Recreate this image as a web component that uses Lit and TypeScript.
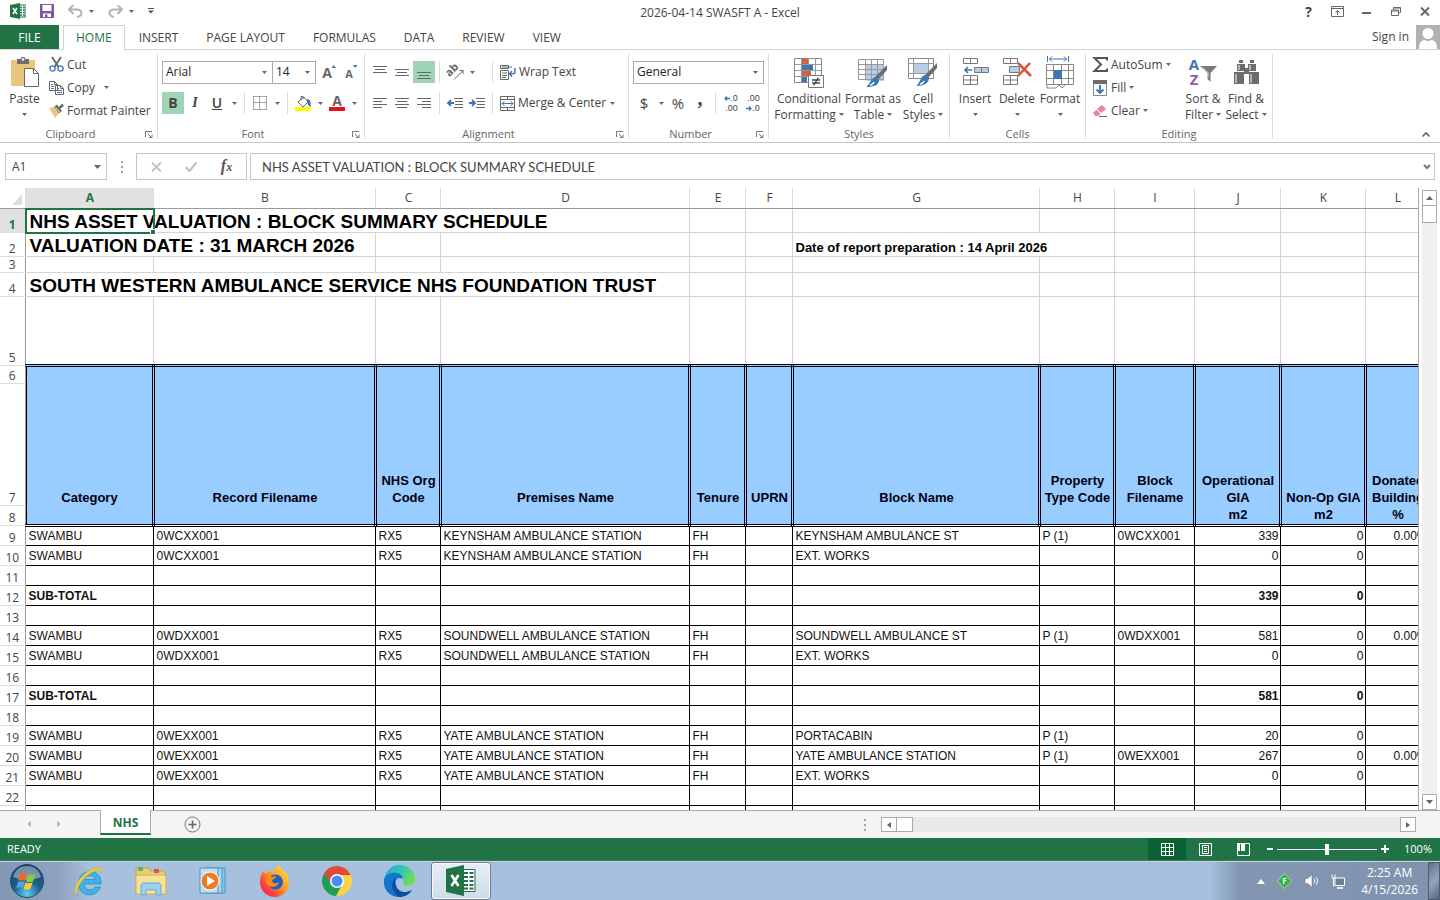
import { LitElement, html, css, svg, nothing, TemplateResult } from "lit";
import { customElement } from "lit/decorators.js";
import { classMap } from "lit/directives/class-map.js";
import { styleMap } from "lit/directives/style-map.js";

const icon = (w: number, h: number, body: unknown) =>
  html`<svg width=${w} height=${h} viewBox="0 0 ${w} ${h}" fill="none" aria-hidden="true">${body}</svg>`;

const glyph = (text: string, x: number, y: number, size: number, color: string) =>
  svg`<text x=${x} y=${y} font-family="Open Sans, Noto Sans, sans-serif" font-weight="700" font-size=${size} text-anchor="middle" fill=${color}>${text}</text>`;

const caret = html`<svg class="caret" width="5" height="3" viewBox="0 0 5 3" aria-hidden="true"><path d="M0 0h5L2.500 3z" fill="#666" /></svg>`;

const I = {
  excel: icon(16, 16, svg`<path d="M9 2h7v12H9z" fill="#fff" stroke="#217346"/><path d="M10 4.500h2M13 4.500h2M10 7h2M13 7h2M10 9.500h2M13 9.500h2M10 12h2M13 12h2" stroke="#217346" stroke-width="1.300"/><path d="M0 2l10-2v16L0 14z" fill="#217346"/><path d="M3 5l4 6M7 5l-4 6" stroke="#fff" stroke-width="1.600"/>`),
  save: icon(14, 14, svg`<path d="M0 0h14v14H0z" fill="#7e57a5"/><path d="M2.500 1h9v6h-9z" fill="#fff"/><path d="M3 9.500h8V13H3z" fill="#fff"/><path d="M5 10.500h2.500V13H5z" fill="#7e57a5"/>`),
  undo: icon(15, 13, svg`<path d="M5.500 0L1 4.500 5.500 9M1.500 4.500h7c3 0 5 1.500 5 3.500 0 2.500-2 3.500-4.500 4" stroke="#b4b4b4" stroke-width="2"/>`),
  redo: icon(15, 13, svg`<path d="M9.500 0L14 4.500 9.500 9M13.500 4.500h-7c-3 0-5 1.500-5 3.500 0 2.500 2 3.500 4.500 4" stroke="#b4b4b4" stroke-width="2"/>`),
  custom: icon(6, 6, svg`<path d="M0 .500h6" stroke="#555"/><path d="M0 2.500h6L3 5.500z" fill="#555"/>`),
  ribbonOpts: icon(13, 11, svg`<path d="M.500.500h12v10H.500zM.500 2.500h12M6.500 9V4.500M4.500 6.500l2-2 2 2" stroke="#666"/>`),
  min: icon(9, 9, svg`<path d="M0 6h9" stroke="#666" stroke-width="2"/>`),
  restore: icon(10, 9, svg`<path d="M2.500 2.500V.500h7v5H7.500M.500 3h7v5.500h-7zM.500 4h7M2.500 1h7" stroke="#666"/>`),
  close: icon(10, 9, svg`<path d="M1 .500l8 8M9 .500l-8 8" stroke="#666" stroke-width="2"/>`),
  avatar: icon(24, 24, svg`<path d="M0 0h24v24H0z" fill="#b1b1b1"/><circle cx="12" cy="8.500" r="5.500" fill="#fff"/><path d="M3 24c0-6 2-9 6-9 2 1.500 4 1.500 6 0 4 0 6 3 6 9z" fill="#fff"/>`),
  paste: icon(29, 31, svg`<path d="M1 3h24v26H1z" fill="#e9c57d"/><path d="M7 2h3.500a2.500 2 0 0 1 5 0H19v5H7z" fill="#6d6d6d"/><circle cx="13" cy="2.500" r="1.300" fill="#fff"/><path d="M14.500 11.500h9l5 5v13h-14z" fill="#fff" stroke="#666"/><path d="M23.500 11.500v5h5" stroke="#666"/>`),
  cut: icon(15, 15, svg`<path d="M3 0l6.500 10M12 0L5.500 10" stroke="#666" stroke-width="1.800"/><circle cx="3.500" cy="11.500" r="2.600" stroke="#3e76b5" stroke-width="1.300"/><circle cx="11.500" cy="11.500" r="2.600" stroke="#3e76b5" stroke-width="1.300"/>`),
  copy: icon(15, 14, svg`<path d="M.500.500h5l3 3v6h-8zM6.500 4.500h5l3 3v6h-8z" fill="#fff" stroke="#666"/><path d="M5.500.500v3h3M11.500 4.500v3h3" stroke="#666"/><path d="M2 3.500h2M2 5.500h3M2 7.500h3M8 7.500h2M8 9.500h5M8 11.500h5" stroke="#3e76b5"/>`),
  painter: icon(16, 15, svg`<path d="M1 5l5-1 5 6-4 5z" fill="#e9c57d"/><path d="M6 4l3-2.500L14 8l-3 2.500z" fill="#6d6d6d"/><path d="M10 5l4-4.500 2 2.500-4 3z" fill="#6d6d6d"/><path d="M7.500 4.500l4.500 5" stroke="#fff"/>`),
  launcher: icon(8, 7, svg`<path d="M.500 6V.500H7M3 3l3 3M7 3.500V6.500H4" stroke="#777"/>`),
  grow: icon(14, 16, svg`${glyph("A", 5, 14, 14, "#666")}<path d="M9.500 4h4.500L11.800 1z" fill="#3e76b5"/>`),
  shrink: icon(14, 16, svg`${glyph("A", 5, 14, 11, "#666")}<path d="M9 1h4.500L11.300 4z" fill="#3e76b5"/>`),
  borders: icon(14, 14, svg`<path d="M.500.500h13M.500.500v13M13.500.500v13M.500 6.500h13M6.500.500v13M.500 13.500h13" stroke="#555" stroke-dasharray="1 1"/>`),
  fill: icon(17, 16, svg`<path d="M3 7l6-5 4 5-5 5z" fill="#fff" stroke="#666"/><path d="M6 5V1.500h2V4" stroke="#666"/><path d="M12 4c4 0 4 4 3.500 8-2-1-3.500-3-3.500-8z" fill="#3e76b5"/><path d="M0 12h16v4H0z" fill="#ff0"/>`),
  color: icon(16, 16, svg`${glyph("A", 8, 11, 14, "#666")}<path d="M0 12h16v4H0z" fill="#e6101a"/>`),
  orient: icon(17, 16, svg`<g transform="rotate(-45 6 7)">${glyph("ab", 6, 9, 11, "#666")}</g><path d="M7 15.500l9-9M12.500 6.500H16V10" stroke="#666"/>`),
  wrap: icon(16, 15, svg`<path d="M.500.500h8v3h-8zM.500 5.500h8v9h-8z" stroke="#666"/><path d="M2 2h10M2 8h5M2 10.500h5M2 12.500h4" stroke="#666"/><path d="M15 3v4.500c0 1-1 1.500-5 1.500M12 6L9.500 9 12 11.500" stroke="#3e76b5" stroke-width="1.500"/>`),
  merge: icon(15, 15, svg`<path d="M.500.500h14v14H.500zM.500 3.500h14M.500 11.500h14M7.500.500v3M7.500 11.500v3" stroke="#666"/><path d="M2 7.500h11M4.500 5L2 7.500 4.500 10M10.500 5L13 7.500 10.500 10" stroke="#3e76b5"/>`),
  outdent: icon(16, 11, svg`<path d="M7 .500h9M8 3.500h8M8 6.500h8M7 9.500h9" stroke="#666"/><path d="M7 5H1M4 2L1 5l3 3" stroke="#3e76b5" stroke-width="1.800"/>`),
  indent: icon(16, 11, svg`<path d="M7 .500h9M8 3.500h8M8 6.500h8M7 9.500h9" stroke="#666"/><path d="M0 5h6M3 2l3 3-3 3" stroke="#3e76b5" stroke-width="1.800"/>`),
  arrowL: icon(6, 5, svg`<path d="M6 2.500H1M3 .500l-2 2 2 2" stroke="#3e76b5" stroke-width="1.300"/>`),
  arrowR: icon(6, 5, svg`<path d="M0 2.500h5M3 .500l2 2-2 2" stroke="#3e76b5" stroke-width="1.300"/>`),
  cond: icon(30, 31, svg`<path d="M.500 1.500h27v24H.500z" fill="#fff" stroke="#888"/><path d="M7.500 1.500v24M14.500 1.500v24M21.500 1.500v24M.500 7.500h27M.500 13.500h27M.500 19.500h27" stroke="#999"/><path d="M8 2h6v5H8zM8 14h9v5H8z" fill="#d5603c"/><path d="M8 8h11v5H8zM8 20h5v5H8z" fill="#3e76b5"/><path d="M14.500 18.500h15v12h-15z" fill="#fff" stroke="#777"/><path d="M18 23h8M18 26h8M24.500 20.500l-5 8" stroke="#444" stroke-width="1.300"/>`),
  fmtTable: icon(30, 31, svg`<path d="M8 8h18v16H8z" fill="#b9cde5"/><path d="M.500 2.500h25v20H.500zM7.500 2.500v20M13.500 2.500v20M19.500 2.500v20M.500 7.500h25M.500 12.500h25M.500 17.500h25" stroke="#999"/><path d="M29 8v5l-10 11-3-3z" fill="#6d6d6d"/><path d="M18 20l3 3c0 5-5 7-13 7 4-2 4-9 10-10z" fill="#3e76b5"/><path d="M12 28c2 0 3-1 4-3" stroke="#fff" stroke-width="1.500"/>`),
  cellStyle: icon(30, 31, svg`<path d="M.500 1.500h25v20H.500z" fill="#fff" stroke="#888"/><path d="M5.500 1.500v20M20.500 1.500v20M.500 6.500h25M.500 16.500h25" stroke="#999"/><path d="M6 7h14v9H6z" fill="#b9cde5"/><path d="M29 6v5L19 22l-3-3z" fill="#6d6d6d"/><path d="M17 18l4 3c0 5-5 8-13 8 4-2 4-10 9-11z" fill="#3e76b5"/><path d="M12 27c2 0 3-1 4-3" stroke="#fff" stroke-width="1.500"/>`),
  insert: icon(27, 30, svg`<path d="M1.500 1.500h14v5h-14zM8.500 1.500v5M1.500 18.500h14v9h-14zM8.500 18.500v9M1.500 23h14" stroke="#777"/><path d="M12.500 10.500h14v5h-14z" fill="#b9cde5" stroke="#777"/><path d="M19.500 10.500v5" stroke="#777"/><path d="M10 13H3M6 10l-3 3 3 3" stroke="#3e76b5" stroke-width="1.700"/>`),
  del: icon(30, 30, svg`<path d="M1.500 1.500h14v5h-14zM8.500 1.500v5M1.500 18.500h14v9h-14zM8.500 18.500v9M1.500 23h14" stroke="#777"/><path d="M7.500 9.500h10v6h-10z" fill="#b9cde5" stroke="#777"/><path d="M16 6l13 13M28 6L16 19" stroke="#dc5038" stroke-width="2.500"/>`),
  format: icon(28, 33, svg`<path d="M1.500 0v6M22.500 0v6M3 3h18M6 .500L3.500 3 6 5.500M18 .500L20.500 3 18 5.500" stroke="#3e76b5"/><path d="M.500 8.500h27v20H.500zM7.500 8.500v20M15.500 8.500v20M22.500 8.500v20M.500 14.500h27M.500 22.500h27" stroke="#888"/><path d="M8 14h8v9H8z" fill="#3e76b5"/><path d="M1 29v3h9l3-3 3 3 3-3" stroke="#888"/>`),
  sum: icon(15, 15, svg`<path d="M14 3.500V1H1.500L8 7.500 1.500 14H14v-2.500" stroke="#555" stroke-width="2"/>`),
  fillDown: icon(14, 16, svg`<path d="M.500 1.500h13v14H.500z" fill="#fff" stroke="#888"/><path d="M0 0h14v4H0z" fill="#6d6d6d"/><path d="M7 5v8M3.500 9.500L7 13l3.500-3.500" stroke="#3e76b5" stroke-width="1.900"/>`),
  clear: icon(14, 12, svg`<path d="M4 4l5-4 4 4-5 4z" fill="#e8849c"/><path d="M0 8l3.500-3.500L7.500 9 5 11H2.500z" fill="#e8849c"/><path d="M6 11.500h8" stroke="#666"/>`),
  sort: icon(30, 31, svg`${glyph("A", 6, 13, 15, "#3e76b5")}${glyph("Z", 6, 28, 15, "#8a5fb0")}<path d="M12 9h17l-6.500 7v9l-3-3v-6z" fill="#7a7a7a"/><path d="M15 10.500l5 5v5" stroke="#ddd"/>`),
  find: icon(27, 31, svg`<path d="M6 3h4v3H6zM17 3h4v3h-4zM4 7h8v7H4zM15 7h8v7h-8zM1 15h10v12H1zM16 15h10v12H16zM11 11h5v6h-5z" fill="#6d6d6d"/><path d="M3 17v9M18 17v9M6 8v5M17 8v5" stroke="#fff"/>`),
  collapse: icon(8, 5, svg`<path d="M.500 4.500L4 1l3.500 3.500" stroke="#666" stroke-width="1.600"/>`),
  cancel: icon(11, 10, svg`<path d="M1 .500l9 9M10 .500l-9 9" stroke="#c0c0c0" stroke-width="1.800"/>`),
  ok: icon(12, 10, svg`<path d="M.500 5l4 4 7-8.500" stroke="#c0c0c0" stroke-width="2.200"/>`),
  expand: icon(8, 6, svg`<path d="M1 1l3 3 3-3" stroke="#777" stroke-width="2"/>`),
  triL: icon(4, 6, svg`<path d="M4 0v6L0 3z" fill="#666"/>`),
  triR: icon(4, 6, svg`<path d="M0 0v6l4-3z" fill="#666"/>`),
  triU: icon(7, 4, svg`<path d="M0 4h7L3.500 0z" fill="#666"/>`),
  triD: icon(7, 4, svg`<path d="M0 0h7L3.500 4z" fill="#666"/>`),
  add: icon(17, 17, svg`<circle cx="8.500" cy="8.500" r="7.500" stroke="#777"/><path d="M4.500 8.500h8M8.500 4.500v8" stroke="#666" stroke-width="1.600"/>`),
  vNormal: icon(13, 13, svg`<path d="M.500.500h12v12H.500zM4.500.500v12M8.500.500v12M.500 4.500h12M.500 8.500h12" stroke="#fff"/>`),
  vLayout: icon(13, 13, svg`<path d="M.500.500h12v12H.500zM3.500 2.500h6v8h-6zM5 4.500h3M5 6.500h3M5 8.500h3" stroke="#fff"/>`),
  vBreak: icon(13, 13, svg`<path d="M.500.500h12v12H.500z" stroke="#fff"/><path d="M0 0h3v8H0zM4 0h4v8H4z" fill="#fff"/>`),
};

const taskIcons: Record<string, TemplateResult> = {
  start: icon(36, 36, svg`<defs><radialGradient id="orb" cx=".5" cy=".9" r=".9"><stop offset="0" stop-color="#5fd0f0"/><stop offset=".45" stop-color="#1f6391"/><stop offset="1" stop-color="#173a60"/></radialGradient></defs><circle cx="18" cy="18" r="16.500" fill="url(#orb)" stroke="#2b4a6b"/><path d="M4 14C6 6 12 3 18 3s12 3 14 11c-9 4-19 4-28 0z" fill="#fff" opacity=".4"/><path d="M11 11c3-2 5-1 7 0l-2 7c-2-1-4-1-7 0z" fill="#ee6a2c"/><path d="M19 11.500c2 1 4 1 7 0l-2 7c-3 1-5 1-7 0z" fill="#92c83e"/><path d="M9 19c3-1 5-1 7 0l-2 6c-2-1-4-1-7 0z" fill="#4aa8e0"/><path d="M16.500 19.500c2 1 4 1 7 0l-2 6.500c-3 1-5 1-7 0z" fill="#fbc932"/>`),
  ie: icon(34, 34, svg`<path d="M29 20H12c0 7 9 7 11 3h5.500c-4 12-22 10-22-4 0-15 24-16 22.500 1zM12.500 15.500H23c-.500-5-10-5-10.500 0z" fill="#3db3e8" stroke="#2286c0" stroke-width=".7"/><path d="M5 31C-2 26 9 8 24 4c5-1 7 1 5 5 0-3-2-4-6-2C12 11 3 24 5 31z" fill="#f5cf3a" stroke="#d9a520" stroke-width=".5"/>`),
  files: icon(34, 34, svg`<path d="M2 4h12l2 3h15v22H2z" fill="#eccd72" stroke="#c9a244"/><path d="M4 3h5v4H4z" fill="#5cb85c"/><path d="M20 5h5v4h-5z" fill="#d9534f"/><path d="M2 11h30v19H2z" fill="#f7e29a" stroke="#cfae55"/><path d="M7 31V22c0-2 1-3 3-3h14c2 0 3 1 3 3v9h-5v-5H12v5z" fill="#9ad1ee" stroke="#6aa9d1"/>`),
  wmp: icon(34, 34, svg`<path d="M12 4h17v25H12z" fill="#8ac6e8" stroke="#4c95c5"/><path d="M9 4h17v25H9z" fill="#a7d6ef" stroke="#4c95c5"/><path d="M4 4h18v25H4z" fill="#bfe0f2" stroke="#4c95c5"/><circle cx="14" cy="17" r="9" fill="#ee7a22" stroke="#fff"/><path d="M11 12l8 5-8 5z" fill="#fff"/>`),
  firefox: icon(34, 34, svg`<defs><linearGradient id="ff" x1="1" y1="0" x2="0" y2="1"><stop offset="0" stop-color="#fff04a"/><stop offset=".45" stop-color="#ff9a1f"/><stop offset=".75" stop-color="#ff3b3f"/><stop offset="1" stop-color="#e0207a"/></linearGradient></defs><path d="M17 33C8 33 2 26 2 18c0-5 1-8 4-11l1 3 4-3c2 0 3 1 4 2 1-4 3-6 6-8 0 4 10 6 10 16 0 9-5 16-14 16z" fill="url(#ff)"/><circle cx="17.500" cy="18" r="7.500" fill="#1e5fc4"/><path d="M7 12c3-2 6 0 7 1l4-1c0 3-4 3-4 5 1 3 4 3 7 1-1 6-11 7-13 0-1-2-1-4-1-6z" fill="#ff8a1c"/>`),
  chrome: icon(34, 34, svg`<circle cx="17" cy="17" r="15" fill="#fcd34a"/><path d="M17 17L4 9.500A15 15 0 0 1 30.500 11H17z" fill="#dd4b3e"/><path d="M4 9.500A15 15 0 0 0 16 32l6-11-5-4z" fill="#1e9e57"/><path d="M4 9.500L11.500 20 17 11h13.500A15 15 0 0 0 4 9.500z" fill="#dd4b3e"/><circle cx="17" cy="17" r="7" fill="#fff"/><circle cx="17" cy="17" r="5.500" fill="#4a8af4"/>`),
  edge: icon(34, 34, svg`<defs><linearGradient id="eg" x1="0" y1="0" x2="1" y2=".4"><stop offset="0" stop-color="#2aa5e0"/><stop offset=".6" stop-color="#35c8b0"/><stop offset="1" stop-color="#6fdb5c"/></linearGradient></defs><path d="M2 17C3 7 9 1 17 1c9 0 16 6 16 14 0 4-3 7-7 7-3 0-6-1-5-3 2-4-1-8-6-8C9 11 4 12 2 17z" fill="url(#eg)"/><path d="M2 16c1-5 6-8 12-7 4 0 7 3 7 6-6-3-9 2-7 7 2 6 9 8 16 4-4 6-10 7-13 7C8 33 1 26 2 16z" fill="#1277cc"/><path d="M14 14c-6 4-5 14 3 19 5 0 10-2 13-7-7 4-14 2-16-4-1-3-1-6 0-8z" fill="#0c4f9e"/>`),
  excel: icon(30, 34, svg`<path d="M17 5.500h12v22H17z" fill="#fff" stroke="#217346"/><path d="M18 9h4M23.500 9h4M18 13h4M23.500 13h4M18 17h4M23.500 17h4M18 21h4M23.500 21h4M18 24.500h4M23.500 24.500h4" stroke="#217346" stroke-width="2"/><path d="M0 5l18-4v31L0 28z" fill="#217346"/><path d="M5.500 11l7 11M12.500 11l-7 11" stroke="#fff" stroke-width="2.600"/>`),
};

const alignIcon = (rows: number[][]) =>
  icon(14, 13, rows.map(([x, y, w]) => svg`<path d="M${x} ${y}.5h${w}" stroke="#666"/>`));

interface Column { id: string; width: number; title: string[]; unit?: string }

const columns: Column[] = [
  { id: "A", width: 128, title: ["Category"] },
  { id: "B", width: 222, title: ["Record Filename"] },
  { id: "C", width: 65, title: ["NHS Org", "Code"] },
  { id: "D", width: 249, title: ["Premises Name"] },
  { id: "E", width: 56, title: ["Tenure"] },
  { id: "F", width: 47, title: ["UPRN"] },
  { id: "G", width: 247, title: ["Block Name"] },
  { id: "H", width: 75, title: ["Property", "Type Code"] },
  { id: "I", width: 80, title: ["Block", "Filename"] },
  { id: "J", width: 86, title: ["Operational", "GIA"], unit: "m2" },
  { id: "K", width: 85, title: ["Non-Op GIA"], unit: "m2" },
  { id: "L", width: 64, title: ["Donated", "Building"], unit: "%" },
];
const rowHeadWidth = 25;
const tableWidth = columns.reduce((sum, c) => sum + c.width, rowHeadWidth);

const block = (file: string, site: string, name: string, type: string, blockFile: string, gia: string, pct: string) =>
  ["SWAMBU", file, "RX5", site, "FH", "", name, type, blockFile, gia, "0", pct];
const subtotal = (gia: string) => ["SUB-TOTAL", "", "", "", "", "", "", "", "", gia, "0", ""];
const blank: string[] = Array(12).fill("");

const dataRows: string[][] = [
  block("0WCXX001", "KEYNSHAM AMBULANCE STATION", "KEYNSHAM AMBULANCE ST", "P (1)", "0WCXX001", "339", "0.00%"),
  block("0WCXX001", "KEYNSHAM AMBULANCE STATION", "EXT. WORKS", "", "", "0", ""),
  blank,
  subtotal("339"),
  blank,
  block("0WDXX001", "SOUNDWELL AMBULANCE STATION", "SOUNDWELL AMBULANCE ST", "P (1)", "0WDXX001", "581", "0.00%"),
  block("0WDXX001", "SOUNDWELL AMBULANCE STATION", "EXT. WORKS", "", "", "0", ""),
  blank,
  subtotal("581"),
  blank,
  block("0WEXX001", "YATE AMBULANCE STATION", "PORTACABIN", "P (1)", "", "20", ""),
  block("0WEXX001", "YATE AMBULANCE STATION", "YATE AMBULANCE STATION", "P (1)", "0WEXX001", "267", "0.00%"),
  block("0WEXX001", "YATE AMBULANCE STATION", "EXT. WORKS", "", "", "0", ""),
  blank,
  blank,
];

@customElement("excel-ribbon")
class ExcelRibbon extends LitElement {
  static styles = css`
    :host { display: flex; flex: none; border-bottom: 1px solid #c6c6c6; color: #444; font: 12px/16px "Open Sans", "Noto Sans", sans-serif; position: relative; }
    * { box-sizing: border-box; }
    button, select { font: inherit; color: inherit; background: none; border: 0; padding: 0; margin: 0; border-radius: 0; }
    svg { flex: none; display: block; overflow: visible; }
    .group { display: flex; flex-direction: column; flex: none; margin: 3px 0; border-right: 1px solid #dcdcdc; }
    .body { display: flex; height: 72px; padding-left: 4px; }
    .label { position: relative; text-align: center; line-height: 18px; height: 14px; color: #666; font-size: 11px; }
    .label.launching { padding-right: 16px; }
    .launch { position: absolute; right: 4px; top: 6px; }
    .big { display: flex; flex-direction: column; align-items: center; flex: none; line-height: 15px; white-space: nowrap; }
    .big .art { height: 38px; display: flex; align-items: center; }
    .big .line2 { display: flex; align-items: center; gap: 3px; height: 16px; }
    .stack { display: flex; flex-direction: column; flex: none; }
    .small { display: flex; align-items: center; height: 23px; gap: 3px; white-space: nowrap; }
    .small .slot { width: 16px; display: flex; justify-content: center; }
    .copy .caret { margin-left: 6px; }
    .rows { display: flex; flex-direction: column; gap: 9px; padding-top: 8px; }
    .row { display: flex; align-items: center; height: 22px; }
    .tool { width: 22px; height: 22px; display: flex; align-items: center; justify-content: center; flex: none; font-size: 14px; }
    .drop { width: 12px; height: 22px; display: flex; align-items: center; justify-content: center; flex: none; }
    .on { background: #9fd5b7; }
    .bold { font-weight: 700; }
    .italic { font: italic 700 14px "Liberation Serif", serif; }
    .under { text-decoration: underline; font-weight: 600; }
    .sep { width: 1px; height: 22px; background: #dcdcdc; margin: 0 4px; flex: none; }
    .combo { position: relative; display: flex; align-items: center; height: 23px; border: 1px solid #ababab; background: #fff; }
    .combo + .combo { border-left: 0; }
    .combo select { appearance: none; width: 100%; height: 100%; padding-left: 3px; color: #222; outline: 0; }
    .combo .caret { position: absolute; right: 5px; pointer-events: none; }
    .name { width: 111px; }
    .size { width: 43px; margin-right: 2px; }
    .numfmt { width: 131px; }
    .clipboard { width: 158px; } .font { width: 207px; } .alignment { width: 264px; }
    .number { width: 140px; } .styles { width: 181px; } .cells { width: 136px; } .editing { width: 187px; }
    .paste { width: 41px; margin-right: 3px; }
    .w72 { width: 72px; } .w56 { width: 56px; } .w44 { width: 44px; } .w42 { width: 42px; }
    .sums { width: 92px; padding-left: 2px; }
    .label-tool { display: flex; align-items: center; gap: 3px; padding-left: 3px; white-space: nowrap; }
    .digits { display: flex; flex-direction: column; font: 9px/10px "Liberation Sans", sans-serif; align-items: flex-end; }
    .digits span { display: flex; align-items: center; }
    .currency { font-size: 15px; }
    .mark { font: 700 20px/22px "Liberation Serif", serif; padding-bottom: 10px; }
    .fold { position: absolute; right: 10px; bottom: 5px; }
  `;

  private group(name: string, cls: string, launch: boolean, body: unknown) {
    return html`<section class="group ${cls}" aria-label=${name}>
      <div class="body">${body}</div>
      <div class=${classMap({ label: true, launching: launch })}>${name}${launch ? html`<button class="launch" aria-label="${name} settings">${I.launcher}</button>` : nothing}</div>
    </section>`;
  }
  private big(art: TemplateResult, l1: string, l2: string, cls: string) {
    return html`<button class="big ${cls}"><span class="art">${art}</span><span>${l1}</span><span class="line2">${l2}${caret}</span></button>`;
  }
  private small(art: TemplateResult, text: string, drop = false, cls = "") {
    return html`<button class="small ${cls}"><span class="slot">${art}</span>${text}${drop ? caret : nothing}</button>`;
  }
  private tool(label: string, body: unknown, cls = "") {
    return html`<button class="tool ${cls}" aria-label=${label}>${body}</button>`;
  }
  private drop(label: string) {
    return html`<button class="drop" aria-label="${label} options">${caret}</button>`;
  }
  private combo(label: string, value: string, cls: string) {
    return html`<label class="combo ${cls}"><select aria-label=${label}><option>${value}</option></select>${caret}</label>`;
  }

  render() {
    const sep = html`<span class="sep"></span>`;
    return html`
      ${this.group("Clipboard", "clipboard", true, html`
        ${this.big(I.paste, "Paste", "", "paste")}
        <div class="stack">
          ${this.small(I.cut, "Cut")}
          ${this.small(I.copy, "Copy", true, "copy")}
          ${this.small(I.painter, "Format Painter")}
        </div>`)}
      ${this.group("Font", "font", true, html`
        <div class="rows">
          <div class="row">${this.combo("Font", "Arial", "name")}${this.combo("Font size", "14", "size")}${this.tool("Increase font size", I.grow)}${this.tool("Decrease font size", I.shrink)}</div>
          <div class="row">
            ${this.tool("Bold", "B", "bold on")}${this.tool("Italic", "I", "italic")}${this.tool("Underline", "U", "under")}${this.drop("Underline")}
            ${sep}${this.tool("Borders", I.borders)}${this.drop("Borders")}
            ${sep}${this.tool("Fill color", I.fill)}${this.drop("Fill color")}${this.tool("Font color", I.color)}${this.drop("Font color")}
          </div>
        </div>`)}
      ${this.group("Alignment", "alignment", true, html`
        <div class="rows">
          <div class="row">
            ${this.tool("Top align", alignIcon([[0, 0, 14], [2, 3, 10], [0, 6, 14]]))}
            ${this.tool("Middle align", alignIcon([[0, 3, 14], [2, 6, 10], [0, 9, 14]]))}
            ${this.tool("Bottom align", alignIcon([[0, 6, 14], [2, 9, 10], [0, 12, 14]]), "on")}
            ${sep}${this.tool("Orientation", I.orient)}${this.drop("Orientation")}
          </div>
          <div class="row">
            ${this.tool("Align left", alignIcon([[0, 1, 14], [0, 4, 9], [0, 7, 14], [0, 10, 9]]))}
            ${this.tool("Center", alignIcon([[0, 1, 14], [2, 4, 10], [0, 7, 14], [2, 10, 10]]))}
            ${this.tool("Align right", alignIcon([[0, 1, 14], [5, 4, 9], [0, 7, 14], [5, 10, 9]]))}
            ${sep}${this.tool("Decrease indent", I.outdent)}${this.tool("Increase indent", I.indent)}
          </div>
        </div>
        <div class="rows">
          <div class="row">${sep}<button class="label-tool">${I.wrap}Wrap Text</button></div>
          <div class="row">${sep}<button class="label-tool">${I.merge}Merge &amp; Center</button>${this.drop("Merge")}</div>
        </div>`)}
      ${this.group("Number", "number", true, html`
        <div class="rows">
          <div class="row">${this.combo("Number format", "General", "numfmt")}</div>
          <div class="row">
            ${this.tool("Accounting format", "$", "currency")}${this.drop("Accounting")}
            ${this.tool("Percent style", "%", "currency")}${this.tool("Comma style", ",", "mark")}
            ${sep}
            ${this.tool("Increase decimal", html`<span class="digits"><span>${I.arrowL}.0</span><span>.00</span></span>`)}
            ${this.tool("Decrease decimal", html`<span class="digits"><span>.00</span><span>${I.arrowR}.0</span></span>`)}
          </div>
        </div>`)}
      ${this.group("Styles", "styles", false, html`
        ${this.big(I.cond, "Conditional", "Formatting", "w72")}
        ${this.big(I.fmtTable, "Format as", "Table", "w56")}
        ${this.big(I.cellStyle, "Cell", "Styles", "w44")}`)}
      ${this.group("Cells", "cells", false, html`
        ${this.big(I.insert, "Insert", "", "w42")}
        ${this.big(I.del, "Delete", "", "w42")}
        ${this.big(I.format, "Format", "", "w44")}`)}
      ${this.group("Editing", "editing", false, html`
        <div class="stack sums">
          ${this.small(I.sum, "AutoSum", true)}
          ${this.small(I.fillDown, "Fill", true)}
          ${this.small(I.clear, "Clear", true)}
        </div>
        ${this.big(I.sort, "Sort &", "Filter", "w42")}
        ${this.big(I.find, "Find &", "Select", "w44")}`)}
      <button class="fold" aria-label="Collapse the ribbon">${I.collapse}</button>
    `;
  }
}

@customElement("excel-grid")
class ExcelGrid extends LitElement {
  static styles = css`
    :host { display: flex; flex: 1; min-height: 0; overflow: hidden; font: 12px/16px "Liberation Sans", Arial, sans-serif; color: #000; }
    * { box-sizing: border-box; }
    .view { flex: 1; min-width: 0; overflow: hidden; border-right: 1px solid #ababab; }
    table { border-collapse: collapse; table-layout: fixed; }
    th, td { padding: 0 1px 0 3px; overflow: visible; white-space: nowrap; text-align: left; vertical-align: bottom; border: 1px solid #d4d4d4; font-weight: 400; line-height: 14px; }
    thead th { border: 0; border-right: 1px solid #dcdcdc; border-bottom: 1px solid #9b9b9b; text-align: center; vertical-align: middle; color: #444; font: 12px/18px "Open Sans", "Noto Sans", sans-serif; }
    thead .active { background: #e1e1e1; color: #217346; font-weight: 700; border-bottom-color: #217346; }
    tbody th.num { border: 0; border-right: 1px solid #9b9b9b; border-bottom: 1px solid #dcdcdc; text-align: center; color: #444; font: 12px/15px "Open Sans", "Noto Sans", sans-serif; padding: 0; }
    tbody th.num.active { background: #e1e1e1; color: #217346; font-weight: 700; border-right-color: #217346; }
    thead .corner { text-align: right; vertical-align: bottom; padding: 0 3px 3px 0; border-right-color: #dcdcdc; }
    .corner svg { display: block; margin-left: auto; }
    .title { font-size: 19px; line-height: 20px; font-weight: 700; padding: 0 4px; position: relative; }
    .date { font-size: 13px; font-weight: 700; line-height: 16px; }
    .sel { position: absolute; top: -1px; left: -1px; border: 2px solid #217346; height: 26px; }
    .handle { position: absolute; right: -3px; bottom: -3px; width: 6px; height: 6px; background: #217346; border: 1px solid #fff; }
    .head { background: #9cf; border: 3px double #001; text-align: center; font-size: 13px; line-height: 17px; font-weight: 700; padding: 0 0 0 2px; color: #001; }
    .head.first { border-left: 0; box-shadow: inset 1px 0 #000; }
    .unit { display: block; height: 18px; line-height: 18px; }
    .title-line { display: block; }
    .data td { border-color: #000; color: #111; line-height: 18px; }
    .data td.n { text-align: right; }
    .data.total td { font-weight: 700; }
    .vbar { width: 21px; flex: none; display: flex; flex-direction: column; align-items: center; padding-top: 2px; }
    .vbar button { width: 15px; height: 16px; border: 1px solid #ababab; background: #fff; padding: 0; display: flex; align-items: center; justify-content: center; flex: none; }
    .vbar .thumb { width: 15px; height: 17px; border: 1px solid #ababab; border-top: 0; background: #fff; }
    .track { flex: 1; width: 15px; background: #f0f0f0; }
  `;

  private num(n: number, active = false) {
    return html`<th scope="row" class=${classMap({ num: true, active })}>${n}</th>`;
  }
  private empties(n: number) {
    return Array.from({ length: n }, () => html`<td></td>`);
  }
  private h(px: number) {
    return styleMap({ height: `${px}px` });
  }

  render() {
    return html`
      <div class="view">
        <table style=${styleMap({ width: `${tableWidth}px` })}>
          <colgroup>
            <col style=${styleMap({ width: `${rowHeadWidth}px` })} />
            ${columns.map((c) => html`<col style=${styleMap({ width: `${c.width}px` })} />`)}
          </colgroup>
          <thead>
            <tr style=${this.h(20)}>
              <th class="corner" aria-label="Select all">${icon(10, 11, svg`<path d="M10 0v11H0z" fill="#dcdcdc"/>`)}</th>
              ${columns.map((c) => html`<th scope="col" class=${classMap({ active: c.id === "A" })}>${c.id}</th>`)}
            </tr>
          </thead>
          <tbody>
            <tr style=${this.h(24)}>${this.num(1, true)}
              <td class="title" colspan="4">NHS ASSET VALUATION : BLOCK SUMMARY SCHEDULE<span class="sel" style=${styleMap({ width: `${columns[0].width + 2}px` })}><span class="handle"></span></span></td>${this.empties(8)}</tr>
            <tr style=${this.h(24)}>${this.num(2)}<td class="title" colspan="2">VALUATION DATE : 31 MARCH 2026</td>${this.empties(4)}<td class="date" colspan="2">Date of report preparation : 14 April 2026</td>${this.empties(4)}</tr>
            <tr style=${this.h(16)}>${this.num(3)}${this.empties(12)}</tr>
            <tr style=${this.h(24)}>${this.num(4)}<td class="title" colspan="4">SOUTH WESTERN AMBULANCE SERVICE NHS FOUNDATION TRUST</td>${this.empties(8)}</tr>
            <tr style=${this.h(69)}>${this.num(5)}${this.empties(12)}</tr>
            <tr style=${this.h(18)}>${this.num(6)}
              ${columns.map((c, i) => html`<th scope="col" rowspan="3" class=${classMap({ head: true, first: i === 0 })}>${c.title.map((t) => html`<span class="title-line">${t}</span>`)}<span class="unit">${c.unit ?? ""}</span></th>`)}
            </tr>
            <tr style=${this.h(122)}>${this.num(7)}</tr>
            <tr style=${this.h(20)}>${this.num(8)}</tr>
            ${dataRows.map((cells, r) => html`<tr class=${classMap({ data: true, total: cells[0] === "SUB-TOTAL" })} style=${this.h(20)}>
              ${this.num(r + 9)}${cells.map((v, i) => html`<td class=${classMap({ n: i > 8 })}>${v}</td>`)}
            </tr>`)}
          </tbody>
        </table>
      </div>
      <div class="vbar">
        <button aria-label="Scroll up">${I.triU}</button>
        <div class="thumb"></div>
        <div class="track"></div>
        <button aria-label="Scroll down">${I.triD}</button>
      </div>
    `;
  }
}

@customElement("desktop-taskbar")
class DesktopTaskbar extends LitElement {
  static styles = css`
    :host { display: flex; flex: none; height: 39px; align-items: stretch; border-top: 1px solid #c4d3e6; background: linear-gradient(90deg, #8297b4 0, #8ea3c0 60px, #a7c0dd 90px, #a5bfdc calc(100% - 230px), #8396b2 calc(100% - 200px), #8093ae 100%); font: 12px/17px "Open Sans", "Noto Sans", sans-serif; color: #fff; }
    * { box-sizing: border-box; }
    button { border: 0; padding: 0; background: none; display: flex; align-items: center; justify-content: center; }
    svg { display: block; overflow: visible; }
    .start { width: 54px; margin-right: 5px; }
    .app { width: 60px; margin-right: 2px; }
    .app.open { background: linear-gradient(#e6edf6, #cfdbe9); border: 1px solid #6e7f97; border-radius: 3px; box-shadow: inset 0 0 0 1px #f7fafd; }
    .tray { margin-left: auto; display: flex; align-items: center; gap: 12px; }
    .clock { text-align: center; padding: 0 10px 0 4px; }
    .show { width: 12px; background: linear-gradient(135deg, #5f6f86, #96a5ba 50%, #56657b); border: 1px solid #4d5a6e; }
  `;
  render() {
    return html`
      <button class="start" aria-label="Start">${taskIcons.start}</button>
      ${["ie", "files", "wmp", "firefox", "chrome", "edge", "excel"].map((k) => html`<button class=${classMap({ app: true, open: k === "excel" })} aria-label=${k}>${taskIcons[k]}</button>`)}
      <div class="tray">
        ${icon(8, 5, svg`<path d="M0 5h8L4 0z" fill="#fff"/>`)}
        ${icon(15, 16, svg`<path d="M7.500.500l7 7.500-7 7.500L.500 8z" fill="#2fb344" stroke="#d8f5dc" stroke-width=".6"/>${glyph("F", 7.5, 11, 8, "#fff")}`)}
        ${icon(15, 14, svg`<path d="M1 4.500h3l4-4v13l-4-4H1z" fill="#fff" stroke="#5a6a80" stroke-width=".5"/><path d="M10 4.500c1 1.500 1 3.500 0 5M12 3c2 2 2 6 0 8" stroke="#fff"/>`)}
        ${icon(14, 15, svg`<path d="M4 4h9.500v7.500H4z" fill="#6d7f99" stroke="#fff"/><path d="M6 14h6" stroke="#fff" stroke-width="1.600"/><path d="M1 .500v3.500h3V.500M2.500 4v8.500" stroke="#fff"/>`)}
        <div class="clock"><div>2:25 AM</div><div>4/15/2026</div></div>
      </div>
      <button class="show" aria-label="Show desktop"></button>
    `;
  }
}

@customElement("app-root")
class AppRoot extends LitElement {
  static styles = css`
    :host { display: flex; flex-direction: column; height: 100vh; overflow: hidden; background: #fff; color: #444; font: 12px/16px "Open Sans", "Noto Sans", sans-serif; }
    * { box-sizing: border-box; }
    button, input { font: inherit; color: inherit; background: none; border: 0; padding: 0; margin: 0; border-radius: 0; outline: 0; }
    svg { display: block; flex: none; }
    excel-ribbon { height: 93px; }
    .titlebar { display: grid; grid-template-columns: 1fr auto 1fr; align-items: center; height: 25px; flex: none; }
    .quick { display: flex; align-items: center; padding: 0 0 3px 10px; }
    .quick .save { margin: 0 14px; }
    .quick .drop { margin: 0 14px 0 6px; }
    .doc { margin: 0; font-size: 12px; font-weight: 400; line-height: 16px; }
    .window { display: flex; justify-content: flex-end; padding: 0 1px 2px 0; }
    .window button { width: 29px; height: 22px; display: flex; align-items: center; justify-content: center; }
    .window .help { font-size: 14px; font-weight: 700; }
    .tabs { display: flex; height: 25px; flex: none; border-bottom: 1px solid #d4d4d4; font-size: 12px; }
    .tabs .tab { padding: 1px 14px 0; height: 24px; }
    .tabs .file { background: #217346; color: #fff; width: 59px; margin-right: 4px; }
    .tabs .home { color: #217346; border: 1px solid #d4d4d4; border-bottom: 0; background: #fff; height: 25px; padding: 0 12px; }
    .account { margin-left: auto; display: flex; align-items: center; gap: 7px; }
    .fbar { display: flex; height: 45px; padding: 10px 5px 8px; flex: none; align-items: stretch; }
    .box { border: 1px solid #c6c6c6; display: flex; align-items: center; height: 27px; }
    .namebox { width: 102px; padding: 0 5px 0 6px; }
    .namebox input { width: 100%; min-width: 0; }
    .grip { width: 29px; height: 27px; display: flex; align-items: center; justify-content: center; }
    .fx { width: 111px; justify-content: space-around; padding: 0 2px; }
    .fxmark { font: italic 700 16px/20px "Liberation Serif", serif; color: #555; }
    .fxmark small { font-size: 12px; }
    .formula { flex: 1; margin-left: 3px; padding: 0 3px 0 11px; }
    .formula input { flex: 1; min-width: 0; font: 13px/18px Lato, "Open Sans", sans-serif; }
    .sheets { display: flex; height: 28px; flex: none; background: #f4f4f4; border-top: 1px solid #ababab; align-items: flex-start; padding-right: 24px; }
    .nav { width: 100px; height: 26px; display: flex; align-items: center; padding-left: 27px; gap: 26px; opacity: .4; }
    .sheet { width: 51px; height: 25px; margin-top: -1px; background: #fff; border: solid #ababab; border-width: 0 1px; border-bottom: 2px solid #217346; color: #217346; font-weight: 700; padding: 3px 0 0; }
    .new { margin: 5px 0 0 33px; }
    .hscroll { margin-left: auto; display: flex; align-items: center; padding-top: 6px; width: 552px; }
    .dots { width: 17px; flex: none; }
    .hbtn { width: 16px; height: 15px; border: 1px solid #ababab; background: #fff; display: flex; align-items: center; justify-content: center; flex: none; }
    .hthumb { width: 16px; height: 15px; border: 1px solid #ababab; border-left: 0; background: #fff; flex: none; }
    .htrack { flex: 1; height: 15px; background: #e8e8e8; }
    .status { display: flex; align-items: center; height: 23px; flex: none; background: #217346; color: #fff; padding: 0 8px 0 7px; font-size: 11px; border-bottom: 1px solid #3b7a58; }
    .views { margin-left: auto; display: flex; height: 22px; }
    .views button { width: 38px; display: flex; align-items: center; justify-content: center; }
    .views .on { background: #0a6332; }
    .zoom { display: flex; align-items: center; gap: 4px; margin-left: 4px; }
    .zoom input { appearance: none; width: 100px; height: 12px; background: linear-gradient(#fff, #fff) center / 100% 1px no-repeat; }
    .zoom input::-webkit-slider-thumb { appearance: none; width: 4px; height: 11px; background: #fff; }
    .pct { margin-left: 13px; width: 30px; text-align: right; }
  `;

  render() {
    const tabs = ["INSERT", "PAGE LAYOUT", "FORMULAS", "DATA", "REVIEW", "VIEW"];
    const dots = icon(2, 12, svg`<path d="M0 1h2M0 6h2M0 11h2" stroke="#a0a0a0" stroke-width="2"/>`);
    return html`
      <header class="titlebar">
        <div class="quick">
          ${I.excel}
          <button class="save" aria-label="Save">${I.save}</button>
          <button aria-label="Undo">${I.undo}</button><button class="drop" aria-label="Undo list">${caret}</button>
          <button aria-label="Redo">${I.redo}</button><button class="drop" aria-label="Redo list">${caret}</button>
          <button aria-label="Customize toolbar">${I.custom}</button>
        </div>
        <h1 class="doc">2026-04-14 SWASFT A - Excel</h1>
        <div class="window">
          <button class="help">?</button>
          <button aria-label="Ribbon display options">${I.ribbonOpts}</button>
          <button aria-label="Minimize">${I.min}</button>
          <button aria-label="Restore">${I.restore}</button>
          <button aria-label="Close">${I.close}</button>
        </div>
      </header>
      <nav class="tabs">
        <button class="tab file">FILE</button>
        <button class="tab home">HOME</button>
        ${tabs.map((t) => html`<button class="tab">${t}</button>`)}
        <div class="account"><button>Sign in</button>${I.avatar}</div>
      </nav>
      <excel-ribbon></excel-ribbon>
      <div class="fbar">
        <div class="box namebox"><input aria-label="Name box" value="A1" />${I.triD}</div>
        <div class="grip">${dots}</div>
        <div class="box fx">
          <button aria-label="Cancel">${I.cancel}</button>
          <button aria-label="Enter">${I.ok}</button>
          <button class="fxmark" aria-label="Insert function">f<small>x</small></button>
        </div>
        <div class="box formula"><input aria-label="Formula bar" value="NHS ASSET VALUATION : BLOCK SUMMARY SCHEDULE" />${I.expand}</div>
      </div>
      <excel-grid></excel-grid>
      <div class="sheets">
        <div class="nav">${I.triL}${I.triR}</div>
        <button class="sheet">NHS</button>
        <button class="new" aria-label="New sheet">${I.add}</button>
        <div class="hscroll">
          <span class="dots">${dots}</span>
          <button class="hbtn" aria-label="Scroll left">${I.triL}</button>
          <div class="hthumb"></div>
          <div class="htrack"></div>
          <button class="hbtn" aria-label="Scroll right">${I.triR}</button>
        </div>
      </div>
      <footer class="status">
        <span>READY</span>
        <div class="views">
          <button class="on" aria-label="Normal view">${I.vNormal}</button>
          <button aria-label="Page layout view">${I.vLayout}</button>
          <button aria-label="Page break preview">${I.vBreak}</button>
        </div>
        <div class="zoom">
          <button aria-label="Zoom out">${icon(7, 8, svg`<path d="M1 4h6" stroke="#fff" stroke-width="2"/>`)}</button>
          <input type="range" aria-label="Zoom" min="0" max="200" value="100" />
          <button aria-label="Zoom in">${icon(8, 8, svg`<path d="M0 4h8M4 0v8" stroke="#fff" stroke-width="2"/>`)}</button>
        </div>
        <span class="pct">100%</span>
      </footer>
      <desktop-taskbar></desktop-taskbar>
    `;
  }
}
